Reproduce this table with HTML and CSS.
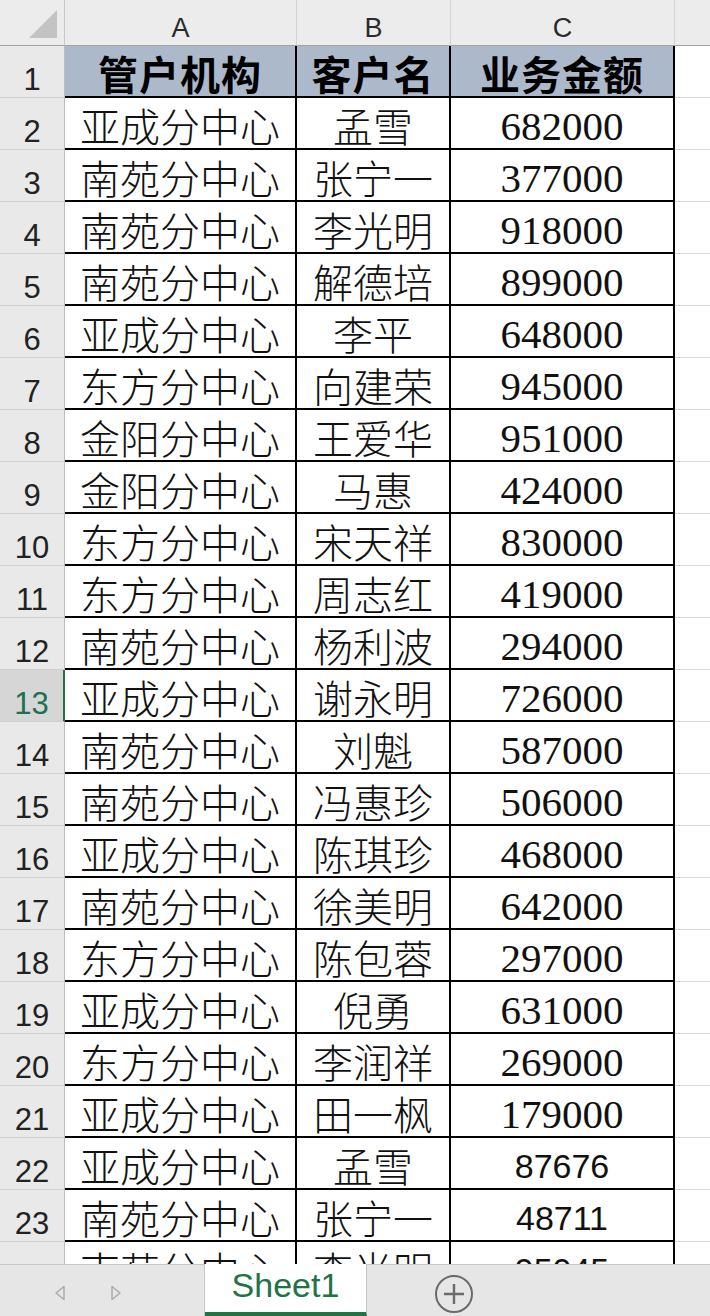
FILE: index.html
```html
<!DOCTYPE html>
<html lang="zh">
<head>
<meta charset="utf-8">
<title>Sheet1</title>
<link rel="stylesheet" href="styles.css">
</head>
<body>
<div class="app">
  <div class="viewport">
    <div class="sheet">
      <div class="corner"><span class="tri"></span></div>
      <div class="colh">A</div>
      <div class="colh">B</div>
      <div class="colh">C</div>
      <div class="colh last"></div>

      <div class="rh">1</div><div class="c hd">管户机构</div><div class="c hd">客户名</div><div class="c hd">业务金额</div><div class="d"></div>
      <div class="rh">2</div><div class="c t">亚成分中心</div><div class="c t">孟雪</div><div class="c n">682000</div><div class="d"></div>
      <div class="rh">3</div><div class="c t">南苑分中心</div><div class="c t">张宁一</div><div class="c n">377000</div><div class="d"></div>
      <div class="rh">4</div><div class="c t">南苑分中心</div><div class="c t">李光明</div><div class="c n">918000</div><div class="d"></div>
      <div class="rh">5</div><div class="c t">南苑分中心</div><div class="c t">解德培</div><div class="c n">899000</div><div class="d"></div>
      <div class="rh">6</div><div class="c t">亚成分中心</div><div class="c t">李平</div><div class="c n">648000</div><div class="d"></div>
      <div class="rh">7</div><div class="c t">东方分中心</div><div class="c t">向建荣</div><div class="c n">945000</div><div class="d"></div>
      <div class="rh">8</div><div class="c t">金阳分中心</div><div class="c t">王爱华</div><div class="c n">951000</div><div class="d"></div>
      <div class="rh">9</div><div class="c t">金阳分中心</div><div class="c t">马惠</div><div class="c n">424000</div><div class="d"></div>
      <div class="rh">10</div><div class="c t">东方分中心</div><div class="c t">宋天祥</div><div class="c n">830000</div><div class="d"></div>
      <div class="rh">11</div><div class="c t">东方分中心</div><div class="c t">周志红</div><div class="c n">419000</div><div class="d"></div>
      <div class="rh">12</div><div class="c t">南苑分中心</div><div class="c t">杨利波</div><div class="c n">294000</div><div class="d"></div>
      <div class="rh active">13</div><div class="c t">亚成分中心</div><div class="c t">谢永明</div><div class="c n">726000</div><div class="d"></div>
      <div class="rh">14</div><div class="c t">南苑分中心</div><div class="c t">刘魁</div><div class="c n">587000</div><div class="d"></div>
      <div class="rh">15</div><div class="c t">南苑分中心</div><div class="c t">冯惠珍</div><div class="c n">506000</div><div class="d"></div>
      <div class="rh">16</div><div class="c t">亚成分中心</div><div class="c t">陈琪珍</div><div class="c n">468000</div><div class="d"></div>
      <div class="rh">17</div><div class="c t">南苑分中心</div><div class="c t">徐美明</div><div class="c n">642000</div><div class="d"></div>
      <div class="rh">18</div><div class="c t">东方分中心</div><div class="c t">陈包蓉</div><div class="c n">297000</div><div class="d"></div>
      <div class="rh">19</div><div class="c t">亚成分中心</div><div class="c t">倪勇</div><div class="c n">631000</div><div class="d"></div>
      <div class="rh">20</div><div class="c t">东方分中心</div><div class="c t">李润祥</div><div class="c n">269000</div><div class="d"></div>
      <div class="rh">21</div><div class="c t">亚成分中心</div><div class="c t">田一枫</div><div class="c n">179000</div><div class="d"></div>
      <div class="rh">22</div><div class="c t">亚成分中心</div><div class="c t">孟雪</div><div class="c ns">87676</div><div class="d"></div>
      <div class="rh">23</div><div class="c t">南苑分中心</div><div class="c t">张宁一</div><div class="c ns">48711</div><div class="d"></div>
      <div class="rh">24</div><div class="c t">南苑分中心</div><div class="c t">李光明</div><div class="c ns">95045</div><div class="d"></div>
    </div>
  </div>

  <div class="tabbar">
    <div class="nav">
      <svg class="arrow" width="12" height="16" viewBox="0 0 12 16"><path d="M10 1.5 L2 8 L10 14.5 Z" fill="none" stroke="#a9a9a9" stroke-width="1.4" stroke-linejoin="round"/></svg>
      <svg class="arrow" width="12" height="16" viewBox="0 0 12 16"><path d="M2 1.5 L10 8 L2 14.5 Z" fill="none" stroke="#a9a9a9" stroke-width="1.4" stroke-linejoin="round"/></svg>
    </div>
    <div class="tab">Sheet1</div>
    <div class="addwrap">
      <svg class="add" width="40" height="40" viewBox="0 0 40 40"><circle cx="20" cy="20" r="18" fill="none" stroke="#6a6a6a" stroke-width="2"/><path d="M10 20 H30 M20 10 V30" stroke="#6a6a6a" stroke-width="2.4"/></svg>
    </div>
  </div>
</div>
</body>
</html>
```

FILE: styles.css
```css
* { box-sizing: border-box; }
html, body { margin: 0; padding: 0; background: #ffffff; }
.app { width: 710px; height: 1316px; display: flex; flex-direction: column; overflow: hidden; }
.viewport { height: 1264px; overflow: hidden; flex: none; }
.sheet {
  display: grid;
  grid-template-columns: 65px 232px 154px 224px 35px;
  grid-template-rows: 46px;
  grid-auto-rows: 52px;
}
.corner {
  background: #ececec;
  border-right: 1px solid #c9c9c9;
  border-bottom: 1px solid #a3a3a3;
  display: flex;
  align-items: flex-end;
  justify-content: flex-end;
  padding: 0 7px 7px 0;
}
.tri {
  width: 0; height: 0;
  border-style: solid;
  border-width: 0 0 28px 28px;
  border-color: transparent transparent #c3c3c3 transparent;
}
.colh {
  background: #ececec;
  border-right: 1px solid #d2d2d2;
  border-bottom: 1px solid #a3a3a3;
  font-family: "Liberation Sans", Arial, sans-serif;
  font-size: 27px;
  line-height: 1;
  color: #2b2b2b;
  display: flex;
  align-items: center;
  justify-content: center;
  padding-top: 12px;
}
.colh.last { border-right: none; }
.rh {
  background: #e9e9e9;
  border-right: 1px solid #bdbdbd;
  border-bottom: 1px solid #cfcfcf;
  font-family: "Liberation Sans", Arial, sans-serif;
  font-size: 31px;
  line-height: 1;
  color: #222;
  display: flex;
  align-items: flex-end;
  justify-content: center;
  padding-bottom: 2px;
}
.rh.active {
  background: #d6d6d6;
  color: #1f6e55;
  border-right: 2px solid #217346;
}
.c {
  border-right: 2px solid #000;
  border-bottom: 2px solid #000;
  display: flex;
  align-items: center;
  justify-content: center;
  white-space: nowrap;
  color: #111;
}
.t {
  font-family: "Noto Sans CJK SC", "Noto Sans CJK JP", sans-serif;
  font-weight: 300;
  font-size: 40px;
  line-height: 1;
  padding-top: 4px;
}
.hd {
  background: #acb9ca;
  font-family: "Noto Sans CJK SC", "Noto Sans CJK JP", sans-serif;
  font-weight: 700;
  font-size: 40px;
  letter-spacing: 1px;
  line-height: 1;
  padding-top: 4px;
  color: #000;
}
.n {
  font-family: "Liberation Serif", "Times New Roman", serif;
  font-size: 41px;
  line-height: 1;
  padding-top: 6px;
}
.ns {
  font-family: "Liberation Sans", Arial, sans-serif;
  font-size: 34px;
  line-height: 1;
  padding-top: 6px;
}
.d {
  border-bottom: 1px solid #d6d6d6;
  background: #fff;
}
.tabbar {
  height: 52px;
  flex: none;
  display: flex;
  background: #e6e6e6;
  border-top: 1px solid #c6c6c6;
}
.nav {
  width: 205px;
  display: flex;
  align-items: center;
  padding-left: 54px;
  gap: 44px;
  border-right: 1px solid #c4c4c4;
}
.arrow { display: block; margin-top: 4px; }
.tab {
  width: 162px;
  margin-top: -1px;
  background: #fff;
  border-right: 1px solid #c4c4c4;
  border-bottom: 4px solid #217346;
  color: #217346;
  font-family: "Liberation Sans", Arial, sans-serif;
  font-size: 34px;
  display: flex;
  align-items: center;
  justify-content: center;
  padding-bottom: 6px;
}
.addwrap {
  flex: 1;
  display: flex;
  align-items: center;
  padding-left: 67px;
  padding-top: 6px;
}
.add { display: block; }
```
